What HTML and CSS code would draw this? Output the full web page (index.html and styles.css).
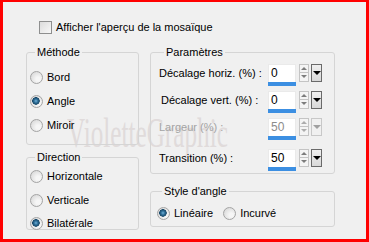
FILE: index.html
```html
<!DOCTYPE html>
<html lang="fr">
<head>
    <meta charset="UTF-8">
    <title>Mosaïque</title>
    <link rel="stylesheet" href="styles.css">
</head>
<body>
    <div class="frame">
        <div class="watermark">VioletteGraphic</div>

        <label class="check-row">
            <span class="checkbox"></span>
            <span>Afficher l'aperçu de la mosaïque</span>
        </label>

        <div class="columns">
            <div class="col-left">
                <fieldset class="group methode">
                    <legend>Méthode</legend>
                    <div class="radio-row"><span class="radio"></span>Bord</div>
                    <div class="radio-row"><span class="radio checked"></span>Angle</div>
                    <div class="radio-row"><span class="radio"></span>Miroir</div>
                </fieldset>

                <fieldset class="group direction">
                    <legend>Direction</legend>
                    <div class="radio-row"><span class="radio"></span>Horizontale</div>
                    <div class="radio-row"><span class="radio"></span>Verticale</div>
                    <div class="radio-row"><span class="radio checked"></span>Bilatérale</div>
                </fieldset>
            </div>

            <div class="col-right">
                <fieldset class="group params">
                    <legend>Paramètres</legend>
                    <div class="param-row">
                        <span class="param-label">Décalage horiz. (%) :</span>
                        <div class="spin">
                            <div class="field"><span class="value">0</span><span class="bar"></span></div>
                            <span class="arrows"><i class="up"></i><i class="down"></i></span>
                            <span class="drop"></span>
                        </div>
                    </div>
                    <div class="param-row">
                        <span class="param-label indent">Décalage vert. (%) :</span>
                        <div class="spin">
                            <div class="field"><span class="value">0</span><span class="bar"></span></div>
                            <span class="arrows"><i class="up"></i><i class="down"></i></span>
                            <span class="drop"></span>
                        </div>
                    </div>
                    <div class="param-row disabled">
                        <span class="param-label">Largeur (%) :</span>
                        <div class="spin">
                            <div class="field"><span class="value">50</span><span class="bar"></span></div>
                            <span class="arrows"><i class="up"></i><i class="down"></i></span>
                            <span class="drop"></span>
                        </div>
                    </div>
                    <div class="param-row last">
                        <span class="param-label">Transition (%) :</span>
                        <div class="spin">
                            <div class="field"><span class="value">50</span><span class="bar"></span></div>
                            <span class="arrows"><i class="up"></i><i class="down"></i></span>
                            <span class="drop"></span>
                        </div>
                    </div>
                </fieldset>

                <fieldset class="group style">
                    <legend>Style d'angle</legend>
                    <div class="inline-radios">
                        <div class="radio-row"><span class="radio checked"></span>Linéaire</div>
                        <div class="radio-row"><span class="radio"></span>Incurvé</div>
                    </div>
                </fieldset>
            </div>
        </div>
    </div>
</body>
</html>
```

FILE: styles.css
```css
body {
    margin: 0;
    font-family: "Liberation Sans", Arial, sans-serif;
    font-size: 11px;
    color: #000;
}

.frame {
    position: relative;
    width: 369px;
    height: 242px;
    box-sizing: border-box;
    border: 3px solid #f00;
    border-top-width: 2px;
    background-color: #f0f0f0;
    overflow: hidden;
}

.watermark {
    position: absolute;
    left: 64px;
    top: 107px;
    font-family: "Liberation Serif", "Times New Roman", serif;
    font-size: 42px;
    color: #e0dbdb;
    transform: scaleX(0.6);
    transform-origin: left top;
    white-space: nowrap;
    pointer-events: none;
}

.check-row {
    position: relative;
    display: flex;
    align-items: center;
    gap: 4px;
    margin: 18px 0 0 36px;
    height: 14px;
    line-height: 14px;
}

.checkbox {
    width: 11px;
    height: 11px;
    border: 1px solid #8e8f8f;
    background: linear-gradient(135deg, #dcdcdc, #f8f8f8);
}

.columns {
    position: relative;
    display: flex;
    gap: 11px;
    margin: 11px 0 0 23px;
}

.col-left {
    width: 113px;
    display: flex;
    flex-direction: column;
    gap: 5px;
}

.col-right {
    width: 185px;
    display: flex;
    flex-direction: column;
    gap: 10px;
}

.group {
    margin: 0;
    padding: 0 0 0 3px;
    border: 1px solid #d5d5d5;
    border-radius: 3px;
    min-width: 0;
}

.group legend {
    margin-left: 5px;
    padding: 0 2px;
    line-height: 14px;
}

.methode {
    height: 92px;
    padding-top: 6px;
}

.direction {
    height: 78px;
}

.direction .radio-row:last-child {
    height: 22px;
}

.radio-row {
    display: flex;
    align-items: center;
    gap: 4px;
    height: 24px;
    line-height: 14px;
}

.radio {
    width: 11px;
    height: 11px;
    border: 1px solid #a4a4a4;
    border-radius: 50%;
    background: radial-gradient(circle at 65% 65%, #f6f6f6 20%, #d6d6d6 90%);
}

.radio.checked {
    background:
        radial-gradient(circle at 45% 45%, #6fb0d8 0, #2c6b94 2px, #1b4a6a 3.5px, transparent 4px),
        radial-gradient(circle at 65% 65%, #f6f6f6 20%, #d6d6d6 90%);
}

.params {
    height: 127px;
    padding-left: 8px;
}

.param-row {
    display: grid;
    grid-template-columns: 109px 54px;
    align-items: center;
    height: 27px;
}

.param-row.last {
    margin-top: 4px;
}

.param-label {
    white-space: nowrap;
}

.param-label.indent {
    padding-left: 2px;
}

.spin {
    display: flex;
    align-items: flex-start;
    height: 22px;
    margin-top: 4px;
}

.field {
    display: flex;
    flex-direction: column;
    width: 28px;
}

.value {
    height: 18px;
    font-size: 12px;
    line-height: 16px;
    padding-left: 2px;
    background-color: #fff;
    box-sizing: border-box;
    border: 1px solid #eaeaea;
    border-bottom: none;
}

.bar {
    height: 4px;
    background-color: #3c8fe2;
}

.arrows {
    display: flex;
    flex-direction: column;
    width: 10px;
    height: 18px;
    margin-left: 3px;
    box-sizing: border-box;
    border: 1px solid #c4c4c4;
    background-color: #f4f4f4;
}

.arrows i {
    flex: 1;
    display: flex;
    align-items: center;
    justify-content: center;
}

.arrows i::before {
    content: "";
    border-left: 3px solid transparent;
    border-right: 3px solid transparent;
}

.arrows .up {
    border-bottom: 1px solid #c4c4c4;
}

.arrows .up::before {
    border-bottom: 3px solid #7c7c7c;
}

.arrows .down::before {
    border-top: 3px solid #7c7c7c;
}

.drop {
    display: flex;
    align-items: center;
    justify-content: center;
    width: 11px;
    height: 18px;
    margin-left: 2px;
    box-sizing: border-box;
    border: 1px solid #6a6a6a;
    background: linear-gradient(#f0f0f0, #d8d8d8);
}

.drop::before {
    content: "";
    border-left: 4px solid transparent;
    border-right: 4px solid transparent;
    border-top: 4px solid #000;
}

.disabled {
    color: #a3a3a3;
}

.disabled .value {
    color: #8c8c8c;
}

.disabled .arrows i::before {
    opacity: 0.6;
}

.disabled .drop {
    border-color: #c8c8c8;
    background: #f0f0f0;
}

.disabled .drop::before {
    border-top-color: #a0a0a0;
}

.style {
    height: 41px;
    padding-left: 6px;
}

.inline-radios {
    display: flex;
    gap: 10px;
    margin-top: 3px;
}
```
